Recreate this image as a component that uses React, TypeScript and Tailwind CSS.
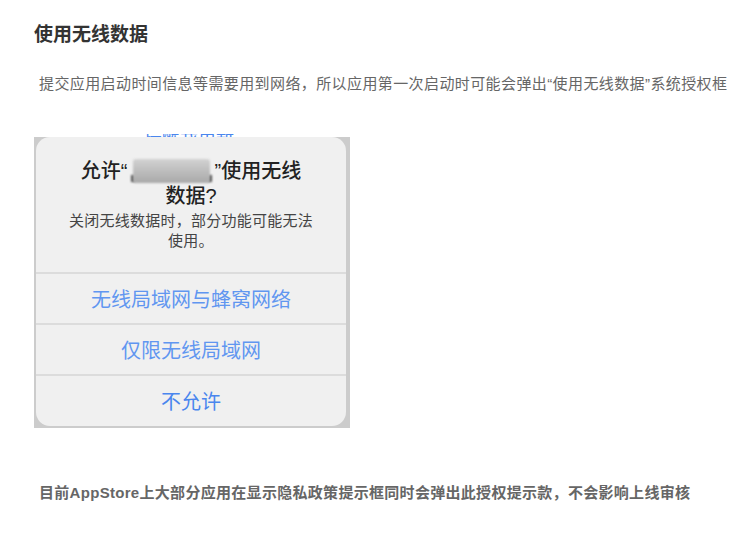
const font = { fontFamily: '"Liberation Sans", "Noto Sans CJK SC", sans-serif' }

function AlertButton({ label, medium }: { label: string; medium?: boolean }) {
  return (
    <div
      className={`flex h-[51px] items-center justify-center border-t-2 border-[#dcdcdc] pt-[2px] text-[20px] ${
        medium ? 'text-[#4a86ee]' : 'text-[#6096f0]'
      }`}
    >
      {label}
    </div>
  )
}

export default function App() {
  return (
    <div className="h-[536px] w-[752px] overflow-hidden bg-white px-[34px] pt-[23px]" style={font}>
      <h2 className="text-[19px] leading-[24px] font-bold text-[#333]">使用无线数据</h2>

      <p className="mt-[25px] pl-[5px] text-[15px] leading-[24px] tracking-[0.4px] whitespace-nowrap text-[#666]">
        提交应用启动时间信息等需要用到网络，所以应用第一次启动时可能会弹出“使用无线数据”系统授权框
      </p>

      <div className="mt-[38px] h-[3px] w-[316px] overflow-hidden pl-[110px] text-[18px] leading-[7px] text-[#4a86ee]">
        提醒我更新
      </div>

      <div className="relative h-[291px] w-[316px] bg-[#cccccc] pr-[4px] pl-[2px]">
        <div className="flex h-[289px] flex-col overflow-hidden rounded-[14px] bg-[#f0f0f0]">
          <div className="h-[135px] pt-[22px] text-center">
            <p className="text-[20px] leading-[25px] font-medium text-[#222]">
              允许“<span className="inline-block w-[87px]" />”使用无线
              <br />
              数据?
            </p>
            <p className="mt-[2px] px-[20px] text-[15px] leading-[20px] tracking-[0.25px] text-[#444]">
              关闭无线数据时，部分功能可能无法
              <br />
              使用。
            </p>
          </div>
          <AlertButton label="无线局域网与蜂窝网络" />
          <AlertButton label="仅限无线局域网" />
          <AlertButton label="不允许" medium />
        </div>
        <div className="absolute top-[38px] left-[97px] h-[7px] w-[4px] bg-[#555] blur-[1px]" />
        <div className="absolute top-[38px] left-[174px] h-[7px] w-[4px] bg-[#555] blur-[1px]" />
        <div className="absolute top-[22px] left-[99px] h-[24px] w-[77px] rounded-[3px] bg-gradient-to-b from-[#d2d2d2] to-[#a9a9a9] blur-[1px]" />
      </div>

      <p className="mt-[53px] pl-[5px] text-[15px] leading-[24px] font-bold tracking-[0.3px] whitespace-nowrap text-[#666]">
        目前AppStore上大部分应用在显示隐私政策提示框同时会弹出此授权提示款，不会影响上线审核
      </p>
    </div>
  )
}
